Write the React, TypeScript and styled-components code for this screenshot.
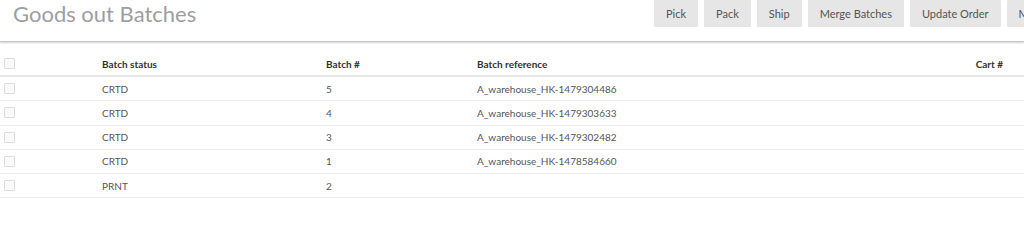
import styled, { createGlobalStyle } from 'styled-components';

const GlobalStyle = createGlobalStyle`
	body {
		margin: 0;
		background: #fff;
		font-family: Lato, "Liberation Sans", sans-serif;
		overflow: hidden;
	}
`;

const Page = styled.div`
	width: 1024px;
	height: 202px;
	overflow: hidden;
`;

const Header = styled.header`
	display: flex;
	height: 41px;
	border-bottom: 1px solid #c4c4c4;
	box-shadow: 0 1px 2px rgba(0, 0, 0, 0.18);
`;

const Title = styled.h1`
	flex: 0 0 641px;
	margin: 0;
	padding-left: 13px;
	font-size: 22px;
	line-height: 27px;
	font-weight: 400;
	color: #9e9e9e;
`;

const Actions = styled.div`
	display: flex;
	gap: 6px;
	align-items: flex-start;
	white-space: nowrap;
`;

const ActionButton = styled.button`
	height: 27px;
	padding: 0 12px;
	border: 0;
	border-radius: 1px;
	background: #e6e6e6;
	color: #555;
	font-family: Lato, "Liberation Sans", sans-serif;
	font-size: 11px;
	cursor: pointer;
`;

const Table = styled.div`
	margin-top: 10px;
`;

const Row = styled.div<{ $head?: boolean }>`
	display: grid;
	grid-template-columns: 102px 224px 151px 1fr auto;
	align-items: center;
	height: ${p => (p.$head ? '23px' : '23.25px')};
	padding-right: 21px;
	border-bottom: ${p => (p.$head ? '2px solid #e8e8e8' : '1px solid #ececec')};
	font-size: 10px;
	font-weight: ${p => (p.$head ? 700 : 400)};
	color: ${p => (p.$head ? '#333' : '#555')};
`;

const Box = styled.span`
	display: block;
	width: 9px;
	height: 9px;
	margin-left: 4px;
	border: 1px solid #dcdcdc;
	border-radius: 1px;
	background: #fafafa;
`;

const buttons = ['Pick', 'Pack', 'Ship', 'Merge Batches', 'Update Order', 'Mark Printed'];

const batches = [
	{ status: 'CRTD', num: 5, ref: 'A_warehouse_HK-1479304486' },
	{ status: 'CRTD', num: 4, ref: 'A_warehouse_HK-1479303633' },
	{ status: 'CRTD', num: 3, ref: 'A_warehouse_HK-1479302482' },
	{ status: 'CRTD', num: 1, ref: 'A_warehouse_HK-1478584660' },
	{ status: 'PRNT', num: 2, ref: '' },
];

function App()
{
	return (
		<Page>
			<GlobalStyle />
			<Header>
				<Title>Goods out Batches</Title>
				<Actions>
					{buttons.map(b => <ActionButton key={b}>{b}</ActionButton>)}
				</Actions>
			</Header>
			<Table>
				<Row $head>
					<Box />
					<span>Batch status</span>
					<span>Batch #</span>
					<span>Batch reference</span>
					<span>Cart #</span>
				</Row>
				{batches.map(b => (
					<Row key={b.num}>
						<Box />
						<span>{b.status}</span>
						<span>{b.num}</span>
						<span>{b.ref}</span>
						<span />
					</Row>
				))}
			</Table>
		</Page>
	);
}

export default App;
